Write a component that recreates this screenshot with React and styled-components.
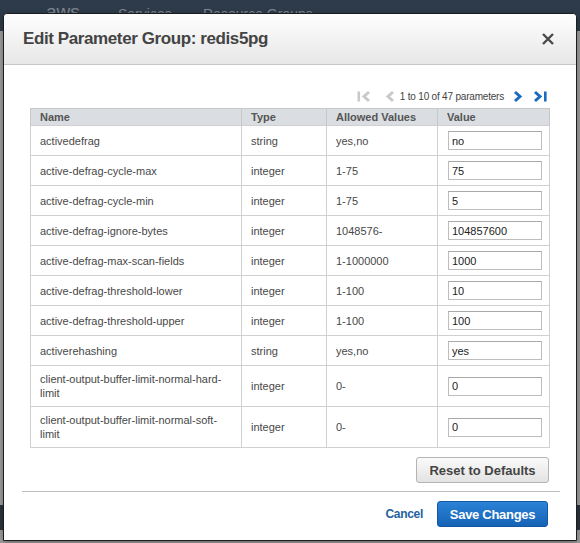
import React from "react";
import styled, { createGlobalStyle } from "styled-components";

const GlobalStyle = createGlobalStyle`
  html, body { margin: 0; padding: 0; }
  body {
    background: #9f9f9f;
    font-family: "Liberation Sans", Arial, sans-serif;
    overflow: hidden;
  }
  * { box-sizing: border-box; }
`;

const Page = styled.div`
  position: relative;
  width: 580px;
  height: 543px;
  display: flex;
  flex-direction: column;
  overflow: hidden;
`;

const NavBar = styled.div`
  height: 31px;
  background: #2e3b4a;
  display: flex;
  align-items: flex-start;
  padding-left: 46px;
  color: #7d8590;
`;

const NavLogo = styled.span`
  font-size: 19px;
  line-height: 22px;
  margin-top: 1px;
  width: 72px;
`;

const NavItem = styled.span`
  font-size: 14px;
  line-height: 20px;
  margin-top: 4px;
  width: ${(p) => p.$w}px;
`;

const Dimmed = styled.div`
  flex: 1;
  background: #9f9f9f;
  display: flex;
  flex-direction: column;
  justify-content: flex-end;
`;

const DarkStrip = styled.div`
  height: 25px;
  background: #2c3440;
  margin-bottom: 13px;
`;

const Modal = styled.div`
  position: absolute;
  left: 3px;
  top: 13px;
  width: 574px;
  height: 528px;
  background: #fff;
  border: 1px solid #1d1d1d;
  border-radius: 4px 4px 0 0;
  display: flex;
  flex-direction: column;
  box-shadow: 0 2px 6px rgba(0, 0, 0, 0.35);
`;

const Header = styled.div`
  height: 51px;
  flex: none;
  display: flex;
  align-items: center;
  justify-content: space-between;
  padding: 0 21px 0 19px;
  background: linear-gradient(#fefefe, #e7e7e7);
  border-bottom: 1px solid #c6c6c6;
  border-radius: 4px 4px 0 0;
`;

const Title = styled.h2`
  margin: 0;
  font-size: 17px;
  font-weight: bold;
  letter-spacing: -0.4px;
  color: #444;
`;

const CloseButton = styled.button`
  border: 0;
  background: none;
  padding: 0;
  width: 14px;
  height: 14px;
  display: flex;
  cursor: pointer;
`;

const Body = styled.div`
  padding: 24px 27px 0 26px;
  display: flex;
  flex-direction: column;
`;

const Pager = styled.div`
  height: 14px;
  display: flex;
  align-items: center;
  justify-content: flex-end;
  margin-bottom: 5px;
  padding-right: 2px;
  font-size: 10px;
  letter-spacing: -0.2px;
  color: #444;
`;

const PagerIcon = styled.span`
  display: flex;
  margin: 0 ${(p) => p.$mr}px 0 0;
`;

const PagerText = styled.span`
  margin-right: 8px;
`;

const Table = styled.table`
  width: 519px;
  table-layout: fixed;
  border-collapse: collapse;
  border: 1px solid #c8c8c8;
  font-size: 11px;
  color: #444;
`;

const Th = styled.th`
  height: 17px;
  padding: 0 9px;
  background: #dadde1;
  text-align: left;
  font-weight: bold;
  color: #555;
  border-left: 1px solid #c8c8c8;
  white-space: nowrap;
`;

const Td = styled.td`
  height: 30px;
  padding: 6px 9px;
  line-height: 14px;
  border: 1px solid #d0d0d0;
  vertical-align: middle;
  color: #484848;
`;

const ValueInput = styled.input`
  display: block;
  width: 94px;
  height: 19px;
  margin: -3px 0 -3px 1px;
  border: 1px solid #bdbdbd;
  border-top-color: #a9a9a9;
  padding: 0 3px;
  font-family: "Liberation Sans", Arial, sans-serif;
  font-size: 11px;
  color: #222;
  background: #fff;
  outline: none;
`;

const ResetRow = styled.div`
  display: flex;
  justify-content: flex-end;
  margin-top: 9px;
`;

const GrayButton = styled.button`
  width: 133px;
  height: 26px;
  border: 1px solid #b4b4b4;
  border-radius: 3px;
  background: linear-gradient(#fafafa, #e3e3e3);
  font-family: "Liberation Sans", Arial, sans-serif;
  font-size: 13px;
  font-weight: bold;
  color: #444;
  cursor: pointer;
`;

const Divider = styled.hr`
  border: 0;
  border-top: 1px solid #bdbdbd;
  margin: 8px 16px 0 18px;
`;

const Footer = styled.div`
  display: flex;
  justify-content: flex-end;
  align-items: center;
  gap: 14px;
  padding: 9px 28px 0 0;
`;

const LinkButton = styled.button`
  border: 0;
  background: none;
  padding: 0;
  font-family: "Liberation Sans", Arial, sans-serif;
  font-size: 12px;
  font-weight: bold;
  letter-spacing: -0.3px;
  color: #23629f;
  cursor: pointer;
`;

const PrimaryButton = styled.button`
  width: 111px;
  height: 26px;
  border: 1px solid #1457a3;
  border-radius: 3px;
  background: linear-gradient(#2b82d6, #1663b6);
  font-family: "Liberation Sans", Arial, sans-serif;
  font-size: 13px;
  font-weight: bold;
  letter-spacing: -0.3px;
  color: #fff;
  cursor: pointer;
`;

const Chevron = ({ dir, bar, color }) => {
  const left = dir === "left";
  const pts = left ? "9,2 4,6.5 9,11" : "3,2 8,6.5 3,11";
  return (
    <svg width={bar ? 15 : 11} height="13" viewBox={bar ? "0 0 15 13" : "0 0 11 13"}>
      {bar && left && <rect x="0.5" y="1.5" width="2.6" height="10" fill={color} />}
      <g transform={bar && left ? "translate(3,0)" : "translate(0,0)"}>
        <polyline points={pts} fill="none" stroke={color} strokeWidth="3" strokeLinejoin="miter" />
      </g>
      {bar && !left && <rect x="12" y="1.5" width="2.6" height="10" fill={color} />}
    </svg>
  );
};

const rows = [
  ["activedefrag", "string", "yes,no", "no"],
  ["active-defrag-cycle-max", "integer", "1-75", "75"],
  ["active-defrag-cycle-min", "integer", "1-75", "5"],
  ["active-defrag-ignore-bytes", "integer", "1048576-", "104857600"],
  ["active-defrag-max-scan-fields", "integer", "1-1000000", "1000"],
  ["active-defrag-threshold-lower", "integer", "1-100", "10"],
  ["active-defrag-threshold-upper", "integer", "1-100", "100"],
  ["activerehashing", "string", "yes,no", "yes"],
  ["client-output-buffer-limit-normal-hard-limit", "integer", "0-", "0"],
  ["client-output-buffer-limit-normal-soft-limit", "integer", "0-", "0"],
];

export default function App() {
  return (
    <>
      <GlobalStyle />
      <Page>
        <NavBar>
          <NavLogo>aws</NavLogo>
          <NavItem $w={85}>Services</NavItem>
          <NavItem $w={140}>Resource Groups</NavItem>
        </NavBar>
        <Dimmed>
          <DarkStrip />
        </Dimmed>
        <Modal>
          <Header>
            <Title>Edit Parameter Group: redis5pg</Title>
            <CloseButton aria-label="Close">
              <svg width="14" height="14" viewBox="0 0 14 14">
                <path d="M2 2 L12 12 M12 2 L2 12" stroke="#4a4a4a" strokeWidth="2.4" />
              </svg>
            </CloseButton>
          </Header>
          <Body>
            <Pager>
              <PagerIcon $mr={12}>
                <Chevron dir="left" bar color="#c9c9c9" />
              </PagerIcon>
              <PagerIcon $mr={5}>
                <Chevron dir="left" color="#c9c9c9" />
              </PagerIcon>
              <PagerText>1 to 10 of 47 parameters</PagerText>
              <PagerIcon $mr={9}>
                <Chevron dir="right" color="#1a6cc0" />
              </PagerIcon>
              <PagerIcon $mr={0}>
                <Chevron dir="right" bar color="#1a6cc0" />
              </PagerIcon>
            </Pager>
            <Table>
              <colgroup>
                <col style={{ width: 211 }} />
                <col style={{ width: 85 }} />
                <col style={{ width: 111 }} />
                <col style={{ width: 112 }} />
              </colgroup>
              <thead>
                <tr>
                  <Th>Name</Th>
                  <Th>Type</Th>
                  <Th>Allowed Values</Th>
                  <Th>Value</Th>
                </tr>
              </thead>
              <tbody>
                {rows.map(([name, type, allowed, value]) => (
                  <tr key={name}>
                    <Td>{name}</Td>
                    <Td>{type}</Td>
                    <Td>{allowed}</Td>
                    <Td>
                      <ValueInput defaultValue={value} />
                    </Td>
                  </tr>
                ))}
              </tbody>
            </Table>
            <ResetRow>
              <GrayButton>Reset to Defaults</GrayButton>
            </ResetRow>
          </Body>
          <Divider />
          <Footer>
            <LinkButton>Cancel</LinkButton>
            <PrimaryButton>Save Changes</PrimaryButton>
          </Footer>
        </Modal>
      </Page>
    </>
  );
}
